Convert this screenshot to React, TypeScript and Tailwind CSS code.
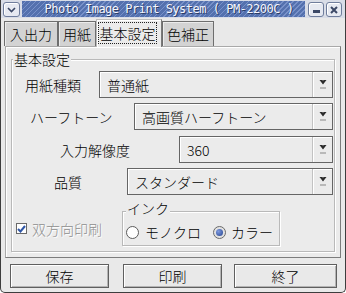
import React from 'react'

const jp = "font-['Noto_Sans_CJK_JP','Noto_Sans',sans-serif] font-light"

function Arrow() {
  return (
    <svg width="8" height="10" viewBox="0 0 8 10" className="block">
      <polygon points="0.5,0 3.5,0 4,1 4.5,0 7.5,0 4,4.5" fill="#2b2b2b" />
      <rect x="1" y="7" width="6" height="2" fill="#b9b9b9" />
    </svg>
  )
}

function Combo({ value, w }: { value: string; w: string }) {
  return (
    <div className={`flex h-[27px] border border-[#656565] bg-[#ebebeb] shadow-[inset_1px_1px_0_#ffffff] ${w}`}>
      <div className="flex-1 flex items-center pl-[7px] text-[14px] leading-none text-black">{value}</div>
      <div className="w-[20px] flex items-center justify-center border-l border-[#c2c2c2] shadow-[inset_1px_0_0_#ffffff]">
        <Arrow />
      </div>
    </div>
  )
}

function Row({ label, value, ml, lw, cw, mt }: { label: string; value: string; ml: string; lw: string; cw: string; mt: string }) {
  return (
    <div className={`flex items-center ${mt}`}>
      <div className={`${ml} ${lw} text-[14px] leading-none text-black`}>{label}</div>
      <Combo value={value} w={cw} />
    </div>
  )
}

function Tab({ label, w, active }: { label: string; w: string; active?: boolean }) {
  if (active) {
    return (
      <div className={`relative top-[1px] z-10 h-[28px] ${w} bg-[#ebebeb] border-t border-l border-[#bdbdbd] border-r-[#7a7a7a] border-r shadow-[inset_1px_1px_0_#ffffff] pl-[1px] pt-[2px]`}>
        <div className="w-[59px] h-[22px] border border-dotted border-[#222] flex items-center justify-center text-[14px] leading-none">{label}</div>
      </div>
    )
  }
  return (
    <div className={`h-[25px] ${w} bg-[#d3d3d3] border-t border-l border-r border-[#6e6e6e] shadow-[inset_1px_1px_0_#ececec] flex items-center justify-center text-[14px] leading-none`}>
      {label}
    </div>
  )
}

function Button({ label, w, ml }: { label: string; w: string; ml: string }) {
  return (
    <div className={`${ml} ${w} h-[24px] border border-[#5f5f5f] bg-[#e9e9e9] shadow-[inset_1px_1px_0_#ffffff,inset_-1px_-1px_0_#b4b4b4] flex items-center justify-center text-[14px] leading-none`}>
      {label}
    </div>
  )
}

export default function App() {
  return (
    <div className="w-[346px] h-[293px] bg-white">
      <div className={`w-[346px] h-[293px] flex flex-col bg-[#e9e9e9] border-x border-b border-[#3d3d3d] rounded-b-[5px] overflow-hidden ${jp} text-black`}>
        {/* title bar */}
        <div className="h-[18px] flex items-start bg-[#d9dde7]">
          <div className="ml-[2px] mt-[2px] w-[17px] h-[15px] rounded-[3px] border border-[#6f7d9c] bg-[#e6e9f1] shadow-[inset_1px_1px_0_#ffffff] flex items-center justify-center">
            <svg width="9" height="6" viewBox="0 0 9 6">
              <polyline points="1,1 4.5,4.5 8,1" fill="none" stroke="#3b4866" strokeWidth="1.6" />
            </svg>
          </div>
          <div className="ml-[2px] mt-[1px] w-[283px] h-[16px] bg-[repeating-linear-gradient(135deg,#5471ae_0px,#5471ae_2.5px,#7891c9_2.5px,#7891c9_3.5px)] flex items-center justify-center pl-[11px]">
            <span className="font-['DejaVu_Sans_Mono',monospace] font-normal text-[12px] tracking-[-0.5px] leading-none text-[#f4f6ff] [text-shadow:1px_1px_0_#2c3d66] whitespace-pre">
              Photo Image Print System ( PM-2200C )
            </span>
          </div>
          <div className="ml-[3px] mt-[2px] w-[16px] h-[15px] rounded-[3px] border border-[#6f7d9c] bg-[#e6e9f1] shadow-[inset_1px_1px_0_#ffffff] flex items-end justify-center pb-[3px]">
            <div className="w-[7px] h-[3px] bg-[#3b4866]" />
          </div>
          <div className="ml-[2px] mt-[2px] w-[16px] h-[15px] rounded-[3px] border border-[#6f7d9c] bg-[#e6e9f1] shadow-[inset_1px_1px_0_#ffffff] flex items-center justify-center">
            <svg width="8" height="8" viewBox="0 0 8 8">
              <path d="M1 1 L7 7 M7 1 L1 7" stroke="#3b4866" strokeWidth="2" />
            </svg>
          </div>
        </div>

        {/* tabs */}
        <div className="h-[28px] flex items-end pl-[3px] relative z-10">
          <Tab label="入出力" w="w-[54px]" />
          <Tab label="用紙" w="w-[38px]" />
          <Tab label="基本設定" w="w-[66px]" active />
          <Tab label="色補正" w="w-[52px]" />
        </div>

        {/* panel */}
        <div className="ml-[4px] w-[336px] h-[212px] border border-[#7c7c7c] border-t-[#a9a9a9] border-l-[#a9a9a9] bg-[#ebebeb] shadow-[inset_1px_1px_0_#ffffff] pt-[12px] pl-[5px]">
          <div className="relative w-[324px] h-[193px] border border-[#b9b9b9] shadow-[inset_1px_1px_0_#ffffff,1px_1px_0_#ffffff]">
            <div className="absolute left-[1px] top-[-8px] bg-[#ebebeb] px-[1px] text-[14px] leading-none">基本設定</div>

            <Row label="用紙種類" value="普通紙" ml="ml-[13px]" lw="w-[74px]" cw="w-[234px]" mt="mt-[11px]" />
            <Row label="ハーフトーン" value="高画質ハーフトーン" ml="ml-[18px]" lw="w-[104px]" cw="w-[199px]" mt="mt-[5px]" />
            <Row label="入力解像度" value="360" ml="ml-[48px]" lw="w-[119px]" cw="w-[154px]" mt="mt-[6px]" />
            <Row label="品質" value="スタンダード" ml="ml-[42px]" lw="w-[73px]" cw="w-[206px]" mt="mt-[5px]" />

            <div className="flex items-center mt-[16px]">
              <div className="ml-[4px] w-[106px] flex items-center">
                <div className="w-[11px] h-[11px] border border-[#6a6a6a] bg-white flex items-center justify-center">
                  <svg width="9" height="8" viewBox="0 0 9 8">
                    <polyline points="1,4 3.5,6.5 8,1" fill="none" stroke="#2f56a6" strokeWidth="2" />
                  </svg>
                </div>
                <span className="ml-[5px] text-[14px] leading-none text-[#8e8e8e] [text-shadow:1px_1px_0_#ffffff]">双方向印刷</span>
              </div>
              <div className="relative w-[158px] h-[35px] border border-[#b9b9b9] shadow-[inset_1px_1px_0_#ffffff,1px_1px_0_#ffffff] flex items-center pt-[7px]">
                <div className="absolute left-[3px] top-[-11px] bg-[#ebebeb] px-[1px] text-[14px] leading-none">インク</div>
                <div className="ml-[3px] w-[13px] h-[13px] rounded-full border border-[#5c5c5c] bg-white" />
                <span className="ml-[6px] text-[14px] leading-none">モノクロ</span>
                <div className="ml-[12px] w-[13px] h-[13px] rounded-full border border-[#6a6a6a] bg-[#e2e2e2] flex items-center justify-center">
                  <div className="w-[7px] h-[7px] rounded-full bg-[radial-gradient(circle_at_35%_35%,#7f9be0,#24428e)]" />
                </div>
                <span className="ml-[5px] text-[14px] leading-none">カラー</span>
              </div>
            </div>
          </div>
        </div>

        {/* buttons */}
        <div className="flex mt-[6px]">
          <Button label="保存" w="w-[99px]" ml="ml-[9px]" />
          <Button label="印刷" w="w-[99px]" ml="ml-[14px]" />
          <Button label="終了" w="w-[103px]" ml="ml-[12px]" />
        </div>
      </div>
    </div>
  )
}
